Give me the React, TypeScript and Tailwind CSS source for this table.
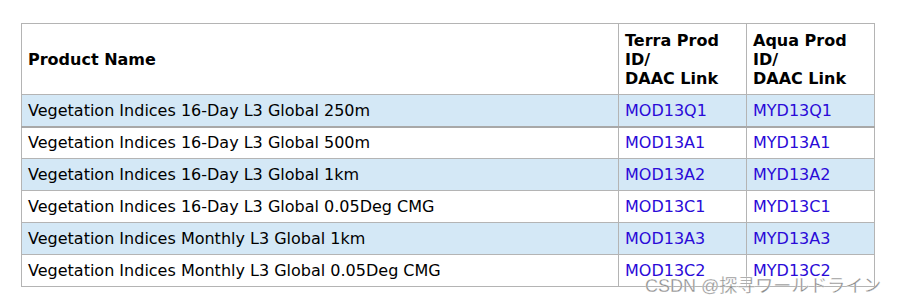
import React from "react";

const rows = [
  { name: "Vegetation Indices 16-Day L3 Global 250m", terra: "MOD13Q1", aqua: "MYD13Q1" },
  { name: "Vegetation Indices 16-Day L3 Global 500m", terra: "MOD13A1", aqua: "MYD13A1" },
  { name: "Vegetation Indices 16-Day L3 Global 1km", terra: "MOD13A2", aqua: "MYD13A2" },
  { name: "Vegetation Indices 16-Day L3 Global 0.05Deg CMG", terra: "MOD13C1", aqua: "MYD13C1" },
  { name: "Vegetation Indices Monthly L3 Global 1km", terra: "MOD13A3", aqua: "MYD13A3" },
  { name: "Vegetation Indices Monthly L3 Global 0.05Deg CMG", terra: "MOD13C2", aqua: "MYD13C2" },
];

export default function App() {
  return (
    <div className="relative w-[901px] h-[305px] bg-white pl-[21px] pt-[23px] font-['DejaVu_Sans',Verdana,sans-serif] text-[16px] text-black">
      <table className="border-collapse w-[853px] table-fixed">
        <colgroup>
          <col className="w-[597px]" />
          <col className="w-[128px]" />
          <col className="w-[128px]" />
        </colgroup>
        <thead>
          <tr className="h-[71px]">
            <th className="border border-[#b4b4b4] text-left align-middle px-[6px] font-bold leading-[19px]">
              Product Name
            </th>
            <th className="border border-[#b4b4b4] text-left align-middle px-[6px] font-bold leading-[19px]">
              Terra Prod
              <br />
              ID/
              <br />
              DAAC Link
            </th>
            <th className="border border-[#b4b4b4] text-left align-middle px-[6px] font-bold leading-[19px]">
              Aqua Prod
              <br />
              ID/
              <br />
              DAAC Link
            </th>
          </tr>
        </thead>
        <tbody>
          {rows.map((r, i) => (
            <tr
              key={r.terra}
              className={`h-[32px] leading-[19px] ${i % 2 === 0 ? "bg-[#d4e8f6]" : "bg-white"} ${i === 0 ? "border-b-2 border-b-[#a8a8a8]" : ""}`}
            >
              <td className="border border-[#b4b4b4] px-[6px] align-middle">{r.name}</td>
              <td className="border border-[#b4b4b4] px-[6px] align-middle text-[#2a0ad8]">{r.terra}</td>
              <td className="border border-[#b4b4b4] px-[6px] align-middle text-[#2a0ad8]">{r.aqua}</td>
            </tr>
          ))}
        </tbody>
      </table>
      <span className="absolute left-[645px] top-[275px] text-[18px] leading-[22px] text-[#8c8c8c] font-['Liberation_Sans','Noto_Sans_CJK_JP',sans-serif] [-webkit-text-stroke:0.3px_white]">
        CSDN @探寻ワールドライン
      </span>
    </div>
  );
}
